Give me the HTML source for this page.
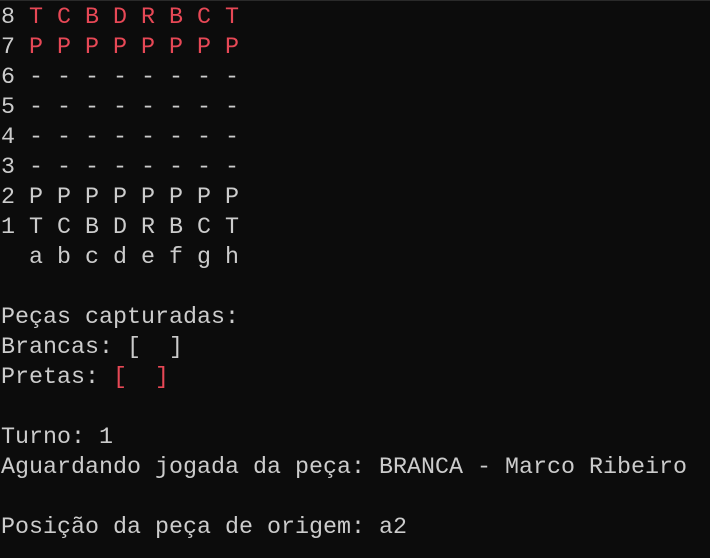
<!DOCTYPE html>
<html><head><meta charset="utf-8"><style>
html,body{margin:0;padding:0;background:#0c0c0c;width:710px;height:558px;overflow:hidden}
body{border-top:1px solid #2a2a2a;box-sizing:border-box}
pre{margin:0;padding:2px 0 0 1px;font-family:"Liberation Mono",monospace;font-size:23.33px;line-height:30px;color:#cccccc;white-space:pre}
.r{color:#e74856}
</style></head><body><pre>8 <span class="r">T C B D R B C T</span>
7 <span class="r">P P P P P P P P</span>
6 - - - - - - - -
5 - - - - - - - -
4 - - - - - - - -
3 - - - - - - - -
2 P P P P P P P P
1 T C B D R B C T
  a b c d e f g h

Peças capturadas:
Brancas: [  ]
Pretas: <span class="r">[  ]</span>

Turno: 1
Aguardando jogada da peça: BRANCA - Marco Ribeiro

Posição da peça de origem: a2</pre></body></html>
